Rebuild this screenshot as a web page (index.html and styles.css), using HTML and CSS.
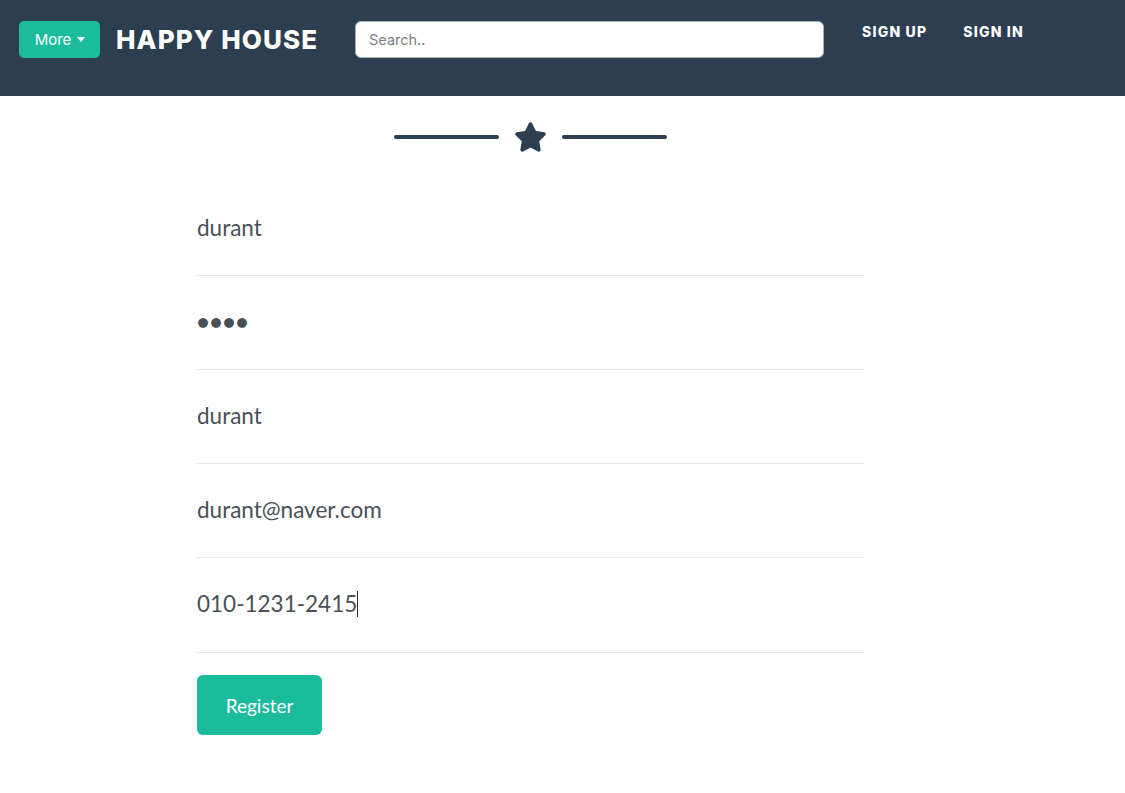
FILE: index.html
```html
<!DOCTYPE html>
<html lang="ko">
<head>
<meta charset="utf-8">
<title>Happy House - Sign Up</title>
<link rel="stylesheet" href="styles.css">
</head>
<body>
<nav class="navbar">
  <button class="more-btn" type="button">More <span class="caret"></span></button>
  <a class="brand" href="#">HAPPY HOUSE</a>
  <input class="search" type="text" placeholder="Search..">
  <ul class="nav-links">
    <li><a href="#">SIGN UP</a></li>
    <li><a href="#">SIGN IN</a></li>
  </ul>
</nav>
<main class="content">
  <div class="divider">
    <span class="line"></span>
    <svg class="star" viewBox="0 0 576 512" aria-hidden="true"><path d="M259.3 17.8L194 150.2 47.9 171.5c-26.2 3.8-36.7 36.1-17.7 54.6l105.7 103-25 145.5c-4.5 26.3 23.2 46 46.4 33.7L288 439.6l130.7 68.7c23.2 12.2 50.9-7.4 46.4-33.7l-25-145.5 105.7-103c19-18.5 8.5-50.8-17.7-54.6L382 150.2 316.7 17.8c-11.7-23.6-45.6-23.9-57.4 0z"/></svg>
    <span class="line"></span>
  </div>
  <form class="form">
    <div class="field"><span class="value">durant</span></div>
    <div class="field"><span class="value dots">●●●●</span></div>
    <div class="field"><span class="value">durant</span></div>
    <div class="field"><span class="value">durant@naver.com</span></div>
    <div class="field"><span class="value">010-1231-2415<span class="cursor"></span></span></div>
    <button class="register" type="button">Register</button>
  </form>
</main>
</body>
</html>
```

FILE: styles.css
```css
* { box-sizing: border-box; }
body {
  margin: 0;
  background: #fff;
  font-family: Lato, "Liberation Sans", sans-serif;
}
.navbar {
  height: 96px;
  background: #2c3e50;
  display: flex;
  align-items: flex-start;
  padding: 21px 19px 0;
}
.more-btn {
  width: 81px;
  height: 37px;
  background: #1abc9c;
  border: 0;
  border-radius: 5px;
  color: #fff;
  font-family: Inter, "Noto Sans", sans-serif;
  font-size: 15px;
  padding: 0 0 0 1px;
  display: flex;
  align-items: center;
  justify-content: center;
  gap: 6px;
}
.caret {
  width: 0;
  height: 0;
  border-left: 4.5px solid transparent;
  border-right: 4.5px solid transparent;
  border-top: 5px solid #fff;
}
.brand {
  margin-left: 16px;
  width: 202px;
  height: 37px;
  line-height: 37px;
  color: #fff;
  text-decoration: none;
  font-family: Inter, "Noto Sans", sans-serif;
  font-weight: 800;
  font-size: 26px;
  letter-spacing: 1.1px;
  white-space: nowrap;
}
.search {
  margin-left: 37px;
  width: 469px;
  height: 37px;
  border: 1px solid #a9b0b8;
  border-radius: 6px;
  padding: 0 13px;
  font-family: Inter, "Noto Sans", sans-serif;
  font-size: 14.5px;
  color: #495057;
  outline: none;
}
.search::placeholder { color: #777f87; }
.nav-links {
  list-style: none;
  margin: 1px 0 0 38px;
  padding: 0;
  display: flex;
  gap: 36px;
}
.nav-links a {
  display: block;
  color: #fff;
  text-decoration: none;
  font-family: Inter, "Noto Sans", sans-serif;
  font-weight: 800;
  font-size: 14px;
  letter-spacing: 1.2px;
  line-height: 20px;
}
.content {
  display: flex;
  flex-direction: column;
  align-items: center;
  padding-right: 64px;
}
.divider {
  display: flex;
  align-items: center;
  gap: 15px;
  margin-top: 26px;
  height: 30px;
}
.line {
  width: 105px;
  height: 4px;
  border-radius: 2px;
  background: #2c3e50;
}
.star {
  width: 33px;
  height: 30px;
  fill: #2c3e50;
}
.form {
  width: 667px;
  margin-top: 30px;
}
.field {
  height: 94px;
  border-bottom: 1px solid #e3e5e8;
  display: flex;
  align-items: center;
  padding-bottom: 2px;
}
.field:last-of-type { height: 95px; }
.value {
  font-size: 22.5px;
  color: #495057;
  line-height: 30px;
}
.dots {
  font-size: 20px;
  letter-spacing: 1px;
  padding-bottom: 2px;
}
.cursor {
  display: inline-block;
  width: 1px;
  height: 26px;
  background: #333;
  vertical-align: -5px;
}
.register {
  margin-top: 22px;
  width: 125px;
  height: 60px;
  background: #1abc9c;
  border: 0;
  border-radius: 6px;
  color: #fff;
  font-family: Lato, sans-serif;
  font-size: 19px;
  padding: 0;
}
```
